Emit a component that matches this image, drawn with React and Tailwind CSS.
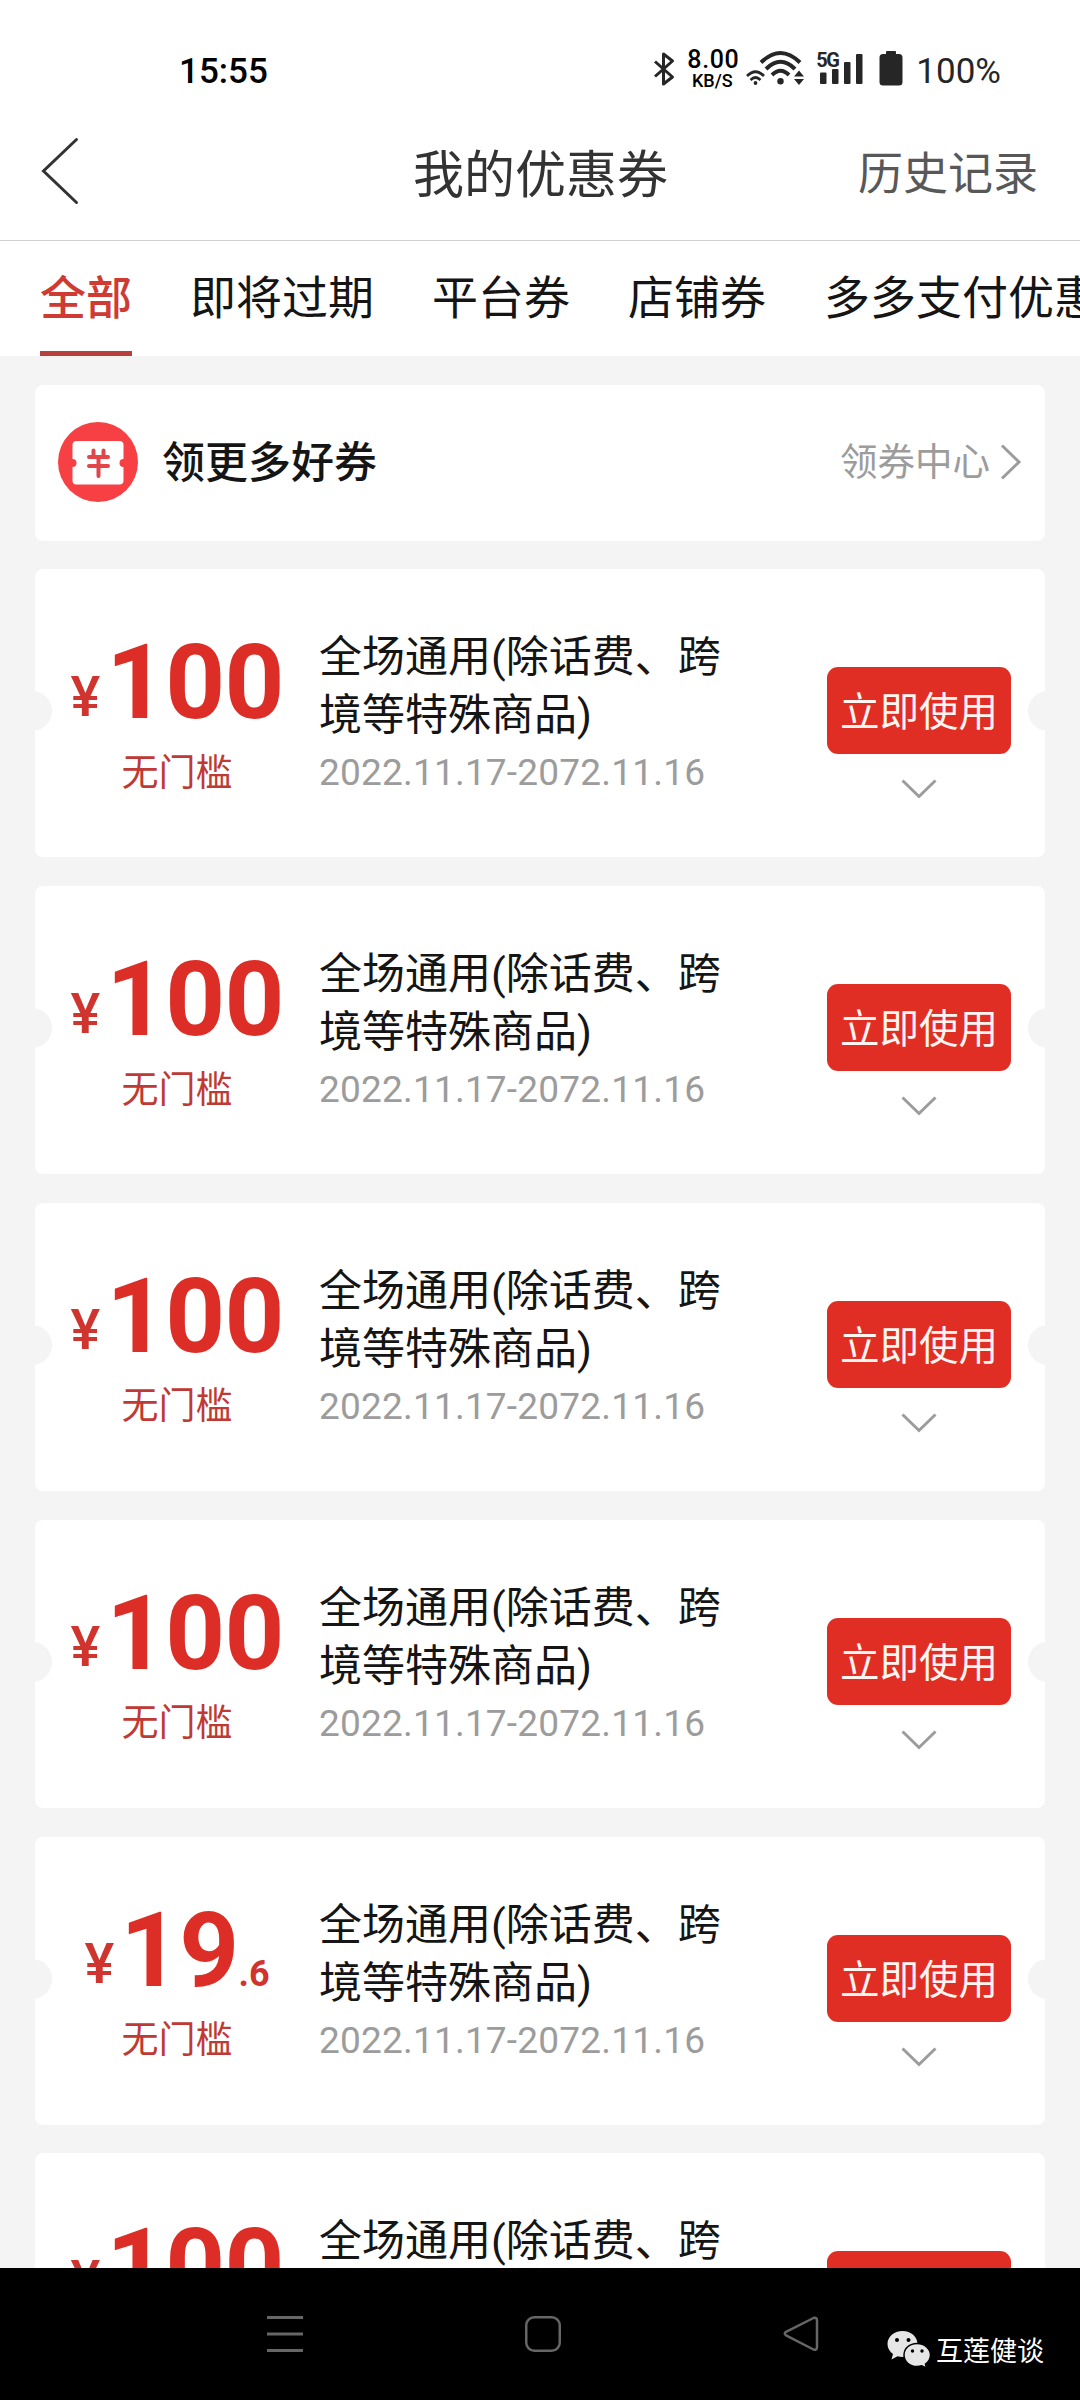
import React, { useState } from 'react';

const TABS = ['全部', '即将过期', '平台券', '店铺券', '多多支付优惠券'];

const COUPONS = [
    { id: 1, amount: '100' },
    { id: 2, amount: '100' },
    { id: 3, amount: '100' },
    { id: 4, amount: '100' },
    { id: 5, amount: '19', decimal: '.6' },
    { id: 6, amount: '100' },
];

const StatusBar = () => (
    <div className="flex h-[106px] shrink-0 items-start justify-between pt-[49px] pr-[79px] pl-[179px] text-[#262626]">
        <span className="mt-[2px] text-[35px] leading-[42px] font-medium text-black">15:55</span>
        <div className="flex items-start">
            {/* bluetooth */}
            <svg className="mt-[2px] h-[36px] w-[22px]" viewBox="0 0 22 36" fill="none" stroke="currentColor" strokeWidth="3">
                <path d="M2 10.500 L19.500 26 L10.500 33 V3 L19.500 10 L2 25.500" strokeLinejoin="round" />
            </svg>
            <div className="ml-[11px] flex w-[54px] flex-col items-center font-medium text-black">
                <span className="mt-[1px] text-[25px] leading-[20px] tracking-[0.6px]">8.00</span>
                <span className="mt-[2px] mr-[2px] text-[18px] leading-[18px]">KB/S</span>
            </div>
            {/* dual wifi */}
            <svg className="ml-[5px] h-[36px] w-[60px]" viewBox="0 0 60 36" fill="none" stroke="currentColor">
                <g strokeWidth="2.6">
                    <path d="M2 27 Q10.500 18.500 19 27" />
                    <path d="M5.500 31 Q10.500 26 15.500 31" />
                </g>
                <circle cx="10.500" cy="34" r="1.900" fill="currentColor" stroke="none" />
                <g strokeWidth="4">
                    <path d="M16 13.500 Q35.500 -5.500 55 13.500" />
                    <path d="M21 20 Q35.500 5.500 50 20" />
                    <path d="M27 26 Q35.500 17.500 44 26" />
                </g>
                <circle cx="35.500" cy="32.300" r="3.200" fill="currentColor" stroke="none" />
                <path d="M49 27.500 L54 21.500 L59 27.500 Z M49 30 L54 36 L59 30 Z" fill="currentColor" stroke="none" />
            </svg>
            {/* 5G signal */}
            <div className="relative ml-[11px] h-[36px] w-[48px]">
                <span className="absolute -top-[1px] left-0 text-[20px] leading-[24px] font-bold tracking-[-1.5px]">5G</span>
                <svg className="h-[36px] w-[48px]" viewBox="0 0 48 36" fill="currentColor">
                    <rect x="4" y="23.500" width="6.500" height="11.500" rx="1" />
                    <rect x="16" y="20" width="6.500" height="15" rx="1" />
                    <rect x="28" y="13" width="6.500" height="22" rx="1" />
                    <rect x="40" y="5" width="6.500" height="30" rx="1" />
                </svg>
            </div>
            <svg className="mt-[2px] ml-[15px] h-[35px] w-[24px]" viewBox="0 0 24 35" fill="currentColor">
                <path d="M8 0 H16 Q17 0 17 1 V3 H20 Q23.500 3 23.500 6.500 V31 Q23.500 34.500 20 34.500 H4 Q0.500 34.500 0.500 31 V6.500 Q0.500 3 4 3 H7 V1 Q7 0 8 0 Z" />
            </svg>
            <span className="mt-[2px] ml-[13px] text-[35px] leading-[42px]">100%</span>
        </div>
    </div>
);

const NavHeader = () => (
    <header className="grid h-[135px] shrink-0 grid-cols-3 items-center border-b border-[#cfcfcf] pr-[42px] pl-[40px]">
        <svg className="mb-[4px] h-[68px] w-[40px]" viewBox="0 0 40 68" fill="none" stroke="#333333" strokeWidth="3" strokeLinecap="round">
            <path d="M36.500 2.500 L3.500 34 L36.500 65.500" />
        </svg>
        <h1 className="mt-[5px] ml-[3px] text-center text-[51px] leading-[60px] whitespace-nowrap text-[#333333]">我的优惠券</h1>
        <button className="mt-[4px] text-right text-[45px] leading-[54px] text-[#585858]">历史记录</button>
    </header>
);

const Tabs = ({ active, onChange }) => (
    <nav className="flex h-[115px] shrink-0 gap-[58px] overflow-hidden pl-[40px]">
        {TABS.map((tab) => (
            <button
                key={tab}
                onClick={() => onChange(tab)}
                className={`shrink-0 border-b-[5px] pt-[4px] text-[46px] leading-[106px] whitespace-nowrap ${active === tab ? 'border-[#b8403c] font-medium text-[#cf3a33]' : 'border-transparent text-[#151515]'}`}
            >
                {tab}
            </button>
        ))}
    </nav>
);

const CouponCenter = () => (
    <div className="flex h-[155.6px] shrink-0 items-center rounded-lg bg-white pr-[22px] pl-[23px]">
        <svg className="h-[81px] w-[81px]" viewBox="0 0 81 81" fill="none">
            <circle cx="40" cy="40" r="40" fill="#f64044" />
            <path d="M18.500 19 H61.500 Q65.500 19 65.500 23 V37 A4 4 0 0 0 65.500 45 V58.500 Q65.500 62.500 61.500 62.500 H18.500 Q14.500 62.500 14.500 58.500 V45 A4 4 0 0 0 14.500 37 V23 Q14.500 19 18.500 19 Z" fill="#fff" />
            <path d="M35.500 28.500 V33 M45.500 28.500 V33 M31 35 H50 M31 44 H50 M40.500 35 V54" stroke="#e2454a" strokeWidth="4" strokeLinecap="round" />
        </svg>
        <span className="ml-[23px] text-[43px] leading-[52px] font-medium text-[#151515]">领更多好券</span>
        <span className="mb-[2px] ml-auto text-[37.5px] leading-[46px] text-[#9c9c9c]">领券中心</span>
        <svg className="mb-[2px] ml-[9px] h-[38px] w-[24px]" viewBox="0 0 24 38" fill="none" stroke="#9c9c9c" strokeWidth="3">
            <path d="M3 2.500 L20 19 L3 35.500" />
        </svg>
    </div>
);

const CouponCard = ({ amount, decimal }) => (
    <div className="relative flex h-[288px] shrink-0 overflow-hidden rounded-lg bg-white">
        {/* ticket notches */}
        <div className="absolute top-[122px] -left-[23px] h-[40px] w-[40px] rounded-full bg-[#f4f4f4]" />
        <div className="absolute top-[122px] -right-[23px] h-[40px] w-[40px] rounded-full bg-[#f4f4f4]" />

        <div className="flex w-[284px] flex-col items-center pt-[62px]">
            <div className="flex items-end font-bold text-[#dc2e26]">
                <span className="mr-[6px] mb-[11px] text-[56px] leading-none font-medium text-[#cf352e]">¥</span>
                <span className="text-[104.5px] leading-none tracking-[-0.8px]">{amount}</span>
                {decimal && <span className="mb-[11px] text-[36px] leading-none text-[#cf352e]">{decimal}</span>}
            </div>
            <span className="mt-[15px] text-[37px] leading-[46px] text-[#bf3a35]">无门槛</span>
        </div>

        <div className="w-[410px] pt-[59px]">
            <p className="text-[43px] leading-[58px] text-[#151515]">全场通用(除话费、跨境等特殊商品)</p>
            <p className="mt-[6px] text-[37px] leading-[46px] tracking-[0.2px] text-[#9c9c9c]">2022.11.17-2072.11.16</p>
        </div>

        <div className="mr-[34px] ml-auto flex flex-col items-center pt-[98px]">
            <button className="h-[87px] w-[184px] rounded-[11px] bg-[#e02e24] pt-[4px] text-[39.5px] leading-[83px] text-[#fff4f0]">立即使用</button>
            <svg className="mt-[25px] h-[20px] w-[36px]" viewBox="0 0 36 20" fill="none" stroke="#9c9c9c" strokeWidth="3">
                <path d="M1.500 1.500 L18 17.500 L34.500 1.500" />
            </svg>
        </div>
    </div>
);

const NavBar = () => (
    <footer className="flex h-[132px] shrink-0 items-start bg-black pl-[267px] text-[#666666]">
        <svg className="mt-[48px] h-[36px] w-[36px]" viewBox="0 0 36 36" stroke="currentColor" strokeWidth="3">
            <path d="M0 1.500 H36 M0 18 H36 M0 34.500 H36" />
        </svg>
        <svg className="mt-[48px] ml-[222px] h-[36px] w-[36px]" viewBox="0 0 36 36" fill="none" stroke="currentColor" strokeWidth="2.5">
            <rect x="1.250" y="1.250" width="33.500" height="33.500" rx="8" />
        </svg>
        <svg className="mt-[48px] ml-[222px] h-[36px] w-[36px]" viewBox="0 0 36 36" fill="none" stroke="currentColor" strokeWidth="2.5">
            <path d="M30.500 2 L3 15.800 Q0.500 17.500 3 19.300 L30.500 33.500 Q34 34.500 34 31 V4.500 Q34 1 30.500 2 Z" strokeLinejoin="round" />
        </svg>
        <svg className="mt-[62px] ml-[68px] h-[38px] w-[44px]" viewBox="0 0 44 38">
            <path d="M15.500 1 C7 1 0.500 6.700 0.500 14 C0.500 18 2.500 21.500 6 24 L4.500 29.500 L10.500 26.300 C12 26.800 14 27 15.500 27 C24 27 30.500 21.300 30.500 14 C30.500 6.700 24 1 15.500 1 Z" fill="#e6e6e6" />
            <path d="M30 13.500 C22.500 13.500 17 18.500 17 25 C17 31.500 22.500 36.500 30 36.500 C31.500 36.500 33.500 36.200 34.700 35.700 L39.500 38 L38.500 34 C41.500 31.800 43.500 28.700 43.500 25 C43.500 18.500 37.500 13.500 30 13.500 Z" fill="#e6e6e6" stroke="#000" strokeWidth="1.500" />
            <g fill="#000">
                <circle cx="10" cy="10" r="2" />
                <circle cx="21.500" cy="10" r="2" />
                <circle cx="25.500" cy="21" r="1.700" />
                <circle cx="35" cy="21" r="1.700" />
            </g>
        </svg>
        <span className="mt-[67px] ml-[5px] text-[27px] leading-[34px] text-white">互莲健谈</span>
    </footer>
);

export default function App() {
    const [activeTab, setActiveTab] = useState('全部');

    return (
        <div className="flex h-[2400px] w-[1080px] flex-col overflow-hidden bg-white font-[Roboto,'Noto_Sans_CJK_SC',sans-serif]">
            <StatusBar />
            <NavHeader />
            <Tabs active={activeTab} onChange={setActiveTab} />
            <main className="flex min-h-0 flex-1 flex-col gap-[28.8px] overflow-hidden bg-[#f4f4f4] px-[35px] pt-[29px]">
                <CouponCenter />
                {COUPONS.map((coupon) => (
                    <CouponCard key={coupon.id} amount={coupon.amount} decimal={coupon.decimal} />
                ))}
            </main>
            <NavBar />
        </div>
    );
}
